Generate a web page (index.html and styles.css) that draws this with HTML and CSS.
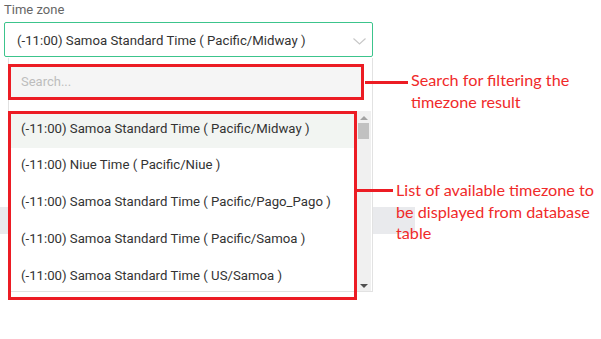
FILE: index.html
```html
<!DOCTYPE html>
<html>
<head>
<meta charset="utf-8">
<link rel="stylesheet" href="styles.css">
</head>
<body>
<div class="page">
  <div class="bg-bar"></div>
  <div class="field">
    <div class="label">Time zone</div>
    <div class="select">
      <span class="select-text">(-11:00) Samoa Standard Time ( Pacific/Midway )</span>
      <svg class="chevron" width="13" height="7" viewBox="0 0 13 7"><path d="M0.5 0.5 L6.5 6 L12.5 0.5" fill="none" stroke="#c8c8c8" stroke-width="1.2"/></svg>
    </div>
    <div class="dropdown">
      <div class="search-row">
        <div class="search">Search...</div>
      </div>
      <div class="list-wrap">
        <div class="list">
          <div class="item active">(-11:00) Samoa Standard Time ( Pacific/Midway )</div>
          <div class="item">(-11:00) Niue Time ( Pacific/Niue )</div>
          <div class="item">(-11:00) Samoa Standard Time ( Pacific/Pago_Pago )</div>
          <div class="item">(-11:00) Samoa Standard Time ( Pacific/Samoa )</div>
          <div class="item">(-11:00) Samoa Standard Time ( US/Samoa )</div>
        </div>
        <div class="scrollbar">
          <div class="arrow up"></div>
          <div class="thumb"></div>
          <div class="spacer"></div>
          <div class="arrow down"></div>
        </div>
        <div class="list-frame"></div>
      </div>
    </div>
  </div>
  <div class="callout callout-search">
    <div class="leader"></div>
    <div class="note">Search for filtering the<br>timezone result</div>
  </div>
  <div class="callout callout-list">
    <div class="leader"></div>
    <div class="note">List of available timezone to<br>be displayed from database<br>table</div>
  </div>
</div>
</body>
</html>
```
FILE: styles.css
```css
html, body {
  margin: 0;
  padding: 0;
  background: #ffffff;
}
.page {
  position: relative;
  width: 601px;
  height: 339px;
  overflow: hidden;
  font-family: Roboto, "Liberation Sans", sans-serif;
}
.bg-bar {
  position: absolute;
  left: 0;
  top: 207px;
  width: 415px;
  height: 27px;
  background: #e9eaed;
}
.field {
  position: relative;
  padding: 2px 0 0 4px;
  width: 369px;
}
.label {
  font-size: 13px;
  line-height: 16px;
  color: #666666;
  height: 20px;
}
.select {
  height: 33px;
  border: 1px solid #3cc48c;
  border-radius: 2px;
  display: flex;
  align-items: center;
  justify-content: space-between;
  padding: 0 6px 0 12px;
  background: #ffffff;
}
.select-text {
  font-size: 13.2px;
  color: #333333;
  padding-top: 1px;
}
.chevron {
  margin-top: 3px;
}
.dropdown {
  margin-left: 4px;
  height: 233px;
  border: 1px solid #e2e2e2;
  border-top: none;
  background: #ffffff;
  display: flex;
  flex-direction: column;
  margin-top: 1px;
}
.search-row {
  padding: 9px 11px 0 2px;
  height: 53px;
  box-sizing: border-box;
}
.search {
  height: 30px;
  background: #f5f5f5;
  outline: 3px solid #ec1c24;
  font-size: 13px;
  line-height: 30px;
  color: #bdbdbd;
  padding-left: 10px;
}
.list-wrap {
  position: relative;
  flex: 1;
  display: flex;
  min-height: 0;
}
.list {
  flex: 1;
  overflow: hidden;
}
.item {
  height: 37px;
  line-height: 33px;
  font-size: 13.2px;
  color: #333333;
  padding-left: 12px;
  white-space: nowrap;
}
.item.active {
  background: #f2f5f2;
  margin-top: 2px;
  height: 35px;
  line-height: 31px;
}
.scrollbar {
  width: 15px;
  background: #f0f0f0;
  display: flex;
  flex-direction: column;
  align-items: center;
  margin-right: 1px;
  padding-top: 5px;
  box-sizing: border-box;
}
.arrow {
  width: 0;
  height: 0;
  border-left: 4px solid transparent;
  border-right: 4px solid transparent;
}
.arrow.up {
  border-bottom: 4px solid #a3a3a3;
}
.arrow.down {
  border-top: 4px solid #505050;
  margin-bottom: 3px;
}
.thumb {
  width: 11px;
  height: 16px;
  background: #c1c1c1;
  margin-top: 3px;
}
.spacer {
  flex: 1;
}
.list-frame {
  position: absolute;
  left: -1px;
  top: 0;
  width: 343px;
  height: 183px;
  border: 3px solid #ec1c24;
  pointer-events: none;
}
.callout {
  position: absolute;
  display: flex;
  align-items: flex-start;
}
.leader {
  height: 3px;
  background: #ec1c24;
}
.note {
  font-family: Lato, "Open Sans", sans-serif;
  font-size: 16.2px;
  line-height: 21.5px;
  color: #f02a2a;
  white-space: nowrap;
}
.callout-search {
  left: 365px;
  top: 69px;
}
.callout-search .leader {
  width: 43px;
  margin-top: 12px;
  margin-right: 3px;
}
.callout-list {
  left: 357px;
  top: 179px;
}
.callout-list .leader {
  width: 36px;
  margin-top: 10px;
  margin-right: 3px;
}
```
